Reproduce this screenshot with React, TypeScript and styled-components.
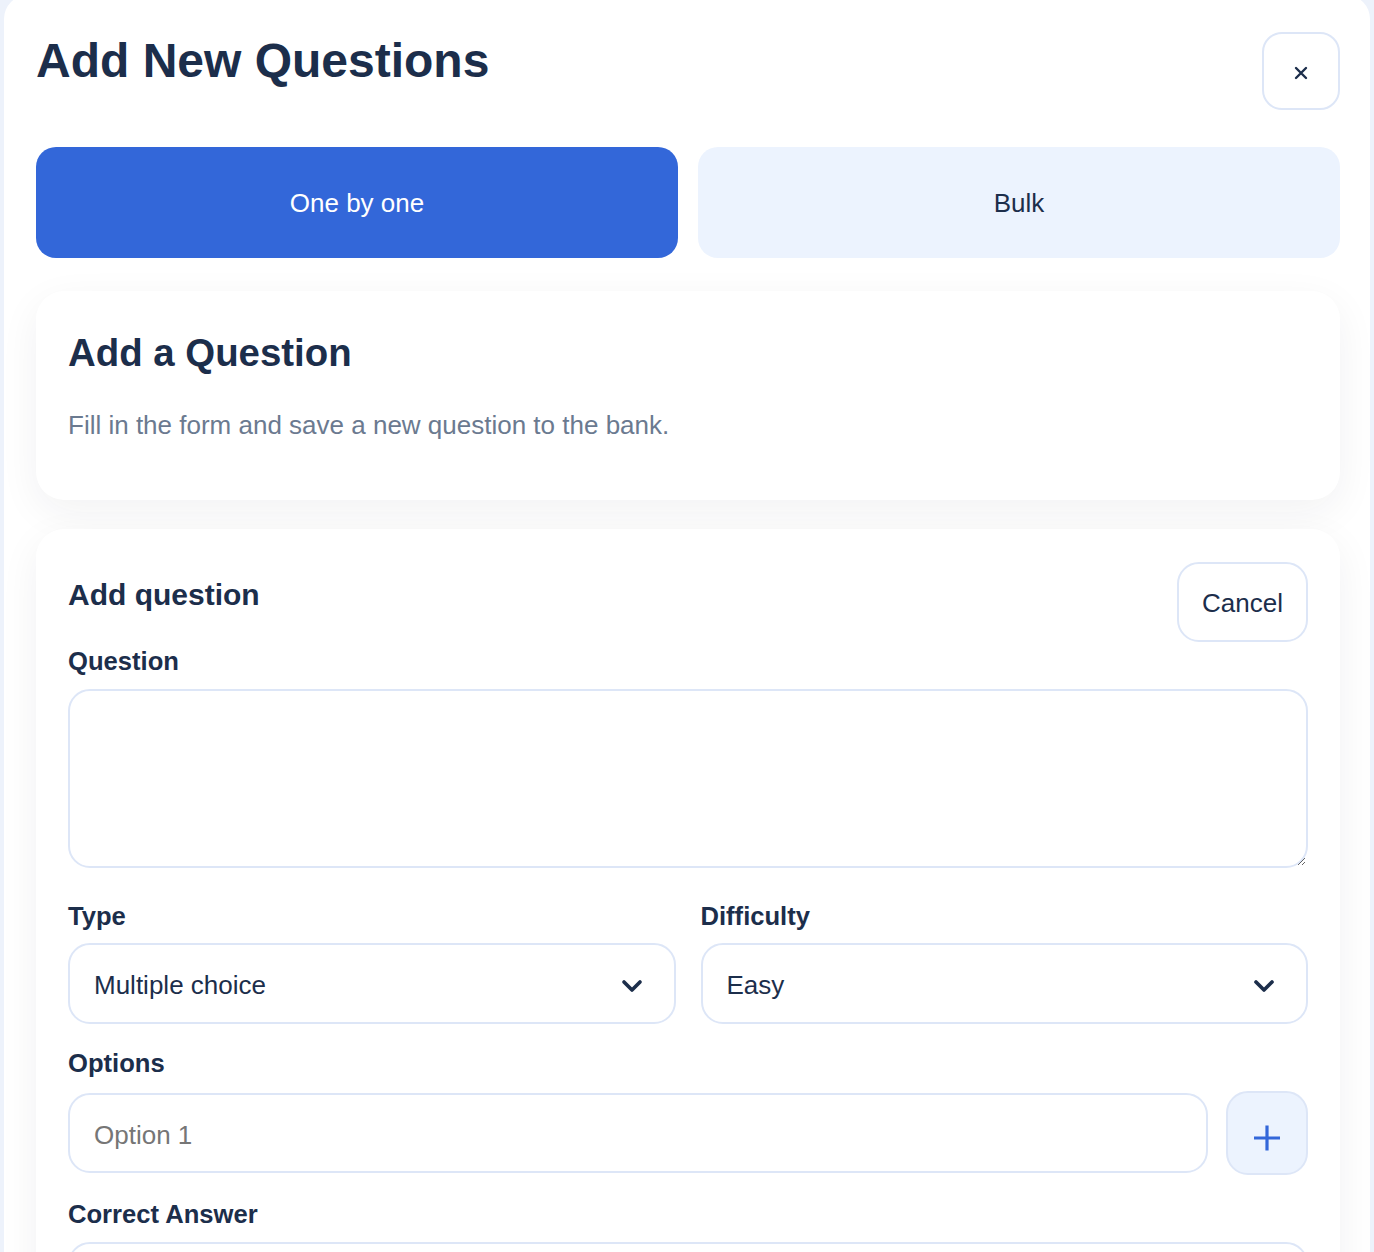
import * as React from 'react';
import styled, { createGlobalStyle } from 'styled-components';
import { ChevronDown } from 'lucide-react';

const GlobalStyle = createGlobalStyle`
  html, body {
    margin: 0;
    padding: 0;
    background: #edf2fb;
    font-family: "Liberation Sans", Arial, Helvetica, sans-serif;
    color: #1c2e4b;
  }
  * { box-sizing: border-box; }
`;

const Page = styled.div`
  padding: 0 4px;
  height: 1252px;
  overflow: hidden;
`;

const Modal = styled.section`
  margin-top: -5px;
  background: #ffffff;
  border-radius: 24px;
  padding: 37px 30px 40px 32px;
`;

const Header = styled.header`
  display: flex;
  justify-content: space-between;
  align-items: flex-start;
`;

const Title = styled.h1`
  margin: 0;
  font-size: 48px;
  line-height: 1.2;
  font-weight: 700;
  color: #1c2e4b;
`;

const CloseButton = styled.button`
  width: 78px;
  height: 78px;
  border: 2px solid #dde6f7;
  border-radius: 20px;
  background: #ffffff;
  display: grid;
  place-items: center;
  padding: 4px 0 0;
  cursor: pointer;
`;

const Tabs = styled.div`
  margin-top: 37px;
  display: grid;
  grid-template-columns: 1fr 1fr;
  gap: 20px;
`;

const Tab = styled.button<{ $active?: boolean }>`
  height: 111px;
  border: none;
  border-radius: 20px;
  padding: 2px 0 0;
  font-family: inherit;
  font-size: 26px;
  background: ${(p) => (p.$active ? '#3367d9' : '#ecf3fe')};
  color: ${(p) => (p.$active ? '#ffffff' : '#1c2e4b')};
  cursor: pointer;
`;

const Card = styled.div`
  background: #ffffff;
  border-radius: 28px;
  box-shadow: 0 12px 40px rgba(30, 41, 59, 0.06);
`;

const IntroCard = styled(Card)`
  margin-top: 33px;
  padding: 39px 32px 55px;
`;

const CardTitle = styled.h2`
  margin: 0;
  font-size: 38.4px;
  line-height: 1.2;
  font-weight: 700;
`;

const Subtitle = styled.p`
  margin: 30px 0 0;
  font-size: 26px;
  line-height: 1.5;
  color: #6b7a90;
`;

const FormCard = styled(Card)`
  margin-top: 29px;
  padding: 33px 32px 32px;
`;

const FormHeader = styled.div`
  display: flex;
  justify-content: space-between;
  align-items: flex-start;
`;

const FormTitle = styled.h3`
  margin: 15px 0 0;
  font-size: 30px;
  line-height: 1.2;
  font-weight: 700;
`;

const CancelButton = styled.button`
  width: 131px;
  height: 80px;
  border: 2px solid #dde6f7;
  border-radius: 22px;
  background: #ffffff;
  padding: 2px 0 0;
  font-family: inherit;
  font-size: 26px;
  color: #1c2e4b;
  cursor: pointer;
`;

const Field = styled.div<{ $gap: number }>`
  margin-top: ${(p) => p.$gap}px;
`;

const Label = styled.label`
  display: block;
  font-size: 25.6px;
  line-height: 1.2;
  font-weight: 700;
  margin-bottom: 12px;
`;

const TextArea = styled.textarea`
  display: block;
  width: 100%;
  height: 179px;
  border: 2px solid #dde6f7;
  border-radius: 22px;
  padding: 20px 24px;
  font-family: inherit;
  font-size: 26px;
  color: #1c2e4b;
  outline: none;
`;

const Row = styled.div`
  display: grid;
  grid-template-columns: 1fr 1fr;
  gap: 25px;
`;

const Select = styled.div`
  height: 81px;
  border: 2px solid #dde6f7;
  border-radius: 22px;
  padding: 4px 26px 0 24px;
  display: flex;
  align-items: center;
  justify-content: space-between;
  font-size: 26px;
  color: #1c2e4b;
  cursor: pointer;
`;

const OptionRow = styled.div`
  display: flex;
  align-items: center;
  gap: 18px;
`;

const TextInput = styled.input`
  flex: 1;
  height: 80px;
  border: 2px solid #dde6f7;
  border-radius: 22px;
  padding: 4px 24px 0;
  font-family: inherit;
  font-size: 26px;
  color: #1c2e4b;
  outline: none;
  &::placeholder { color: #767676; }
`;

const AddButton = styled.button`
  width: 82px;
  height: 84px;
  border: 2px solid #dde6f7;
  border-radius: 22px;
  background: #ecf3fe;
  display: grid;
  place-items: center;
  padding: 9px 0 0;
  cursor: pointer;
`;

function SelectBox({ value }: { value: string }) {
  return (
    <Select>
      <span>{value}</span>
      <ChevronDown size={32} strokeWidth={2.75} color="#1c2e4b" />
    </Select>
  );
}

export default function App() {
  return (
    <>
      <GlobalStyle />
      <Page>
        <Modal>
          <Header>
            <Title>Add New Questions</Title>
            <CloseButton aria-label="Close">
              <svg width="14" height="14" viewBox="0 0 14 14">
                <path d="M2 2 L12 12 M12 2 L2 12" stroke="#1c2e4b" strokeWidth="2.4" strokeLinecap="round" />
              </svg>
            </CloseButton>
          </Header>

          <Tabs>
            <Tab $active>One by one</Tab>
            <Tab>Bulk</Tab>
          </Tabs>

          <IntroCard>
            <CardTitle>Add a Question</CardTitle>
            <Subtitle>Fill in the form and save a new question to the bank.</Subtitle>
          </IntroCard>

          <FormCard>
            <FormHeader>
              <FormTitle>Add question</FormTitle>
              <CancelButton>Cancel</CancelButton>
            </FormHeader>

            <Field $gap={4}>
              <Label>Question</Label>
              <TextArea />
            </Field>

            <Row>
              <Field $gap={33}>
                <Label>Type</Label>
                <SelectBox value="Multiple choice" />
              </Field>
              <Field $gap={33}>
                <Label>Difficulty</Label>
                <SelectBox value="Easy" />
              </Field>
            </Row>

            <Field $gap={24}>
              <Label>Options</Label>
              <OptionRow>
                <TextInput placeholder="Option 1" />
                <AddButton aria-label="Add option">
                  <svg width="28" height="28" viewBox="0 0 28 28">
                    <path d="M14 1.5 V26.5 M1 14 H27" stroke="#3367d9" strokeWidth="3.2" />
                  </svg>
                </AddButton>
              </OptionRow>
            </Field>

            <Field $gap={24}>
              <Label>Correct Answer</Label>
              <SelectBox value="" />
            </Field>
          </FormCard>
        </Modal>
      </Page>
    </>
  );
}
